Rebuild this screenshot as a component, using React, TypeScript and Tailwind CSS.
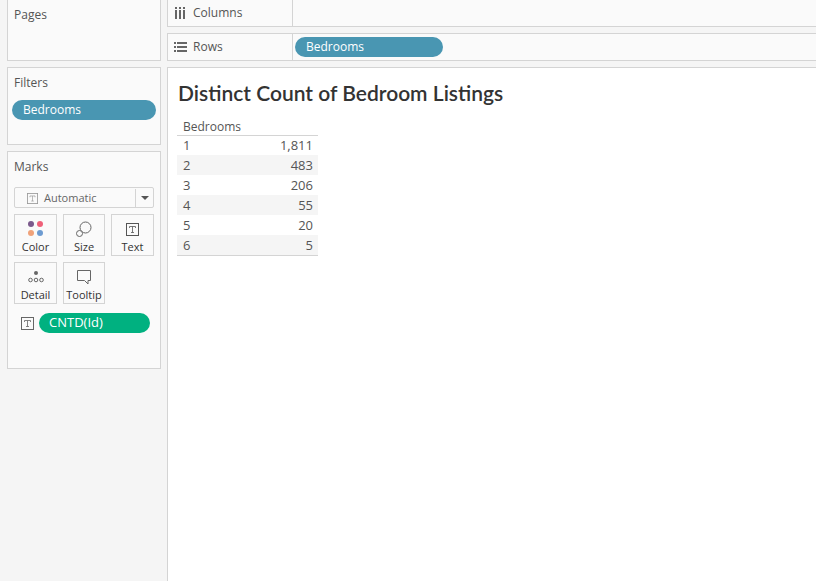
const font = "[font-family:'Open_Sans','Noto_Sans',sans-serif]";

const rows = [
  { bedrooms: "1", count: "1,811" },
  { bedrooms: "2", count: "483" },
  { bedrooms: "3", count: "206" },
  { bedrooms: "4", count: "55" },
  { bedrooms: "5", count: "20" },
  { bedrooms: "6", count: "5" },
];

function TextIcon({ className }: { className: string }) {
  return (
    <svg viewBox="0 0 13 13" className={className} fill="none">
      <rect x="0.5" y="0.5" width="12" height="12" stroke="currentColor" />
      <path d="M3.5 5V3.5H9.5V5M6.5 3.5V9.5M5 9.5H8" stroke="currentColor" strokeWidth="0.8" />
    </svg>
  );
}

function ColorIcon() {
  return (
    <svg viewBox="0 0 16 16" className="h-4 w-4">
      <circle cx="3" cy="3" r="3" fill="#7b5a8c" />
      <circle cx="12" cy="3" r="3" fill="#ef6079" />
      <circle cx="3" cy="12" r="3" fill="#f0a27a" />
      <circle cx="12" cy="12" r="3" fill="#6d9bd1" />
    </svg>
  );
}

function SizeIcon() {
  return (
    <svg viewBox="0 0 16 16" className="h-4 w-4" fill="none" stroke="#666">
      <circle cx="9.5" cy="6.5" r="5.5" fill="#fafafa" />
      <circle cx="3.5" cy="12.5" r="3" fill="#fafafa" />
    </svg>
  );
}

function DetailIcon() {
  return (
    <svg viewBox="0 0 16 16" className="h-4 w-4" fill="none" stroke="#666">
      <circle cx="8" cy="4" r="2" fill="#666" stroke="none" />
      <circle cx="2.5" cy="11" r="1.8" />
      <circle cx="8" cy="11" r="1.8" />
      <circle cx="13.5" cy="11" r="1.8" />
    </svg>
  );
}

function TooltipIcon() {
  return (
    <svg viewBox="0 0 16 16" className="h-4 w-4" fill="none" stroke="#666">
      <path d="M1.5 1.5H14.5V11.5H12V15L8.5 11.5H1.5Z" />
    </svg>
  );
}

function MarkButton({ label, icon }: { label: string; icon: React.ReactNode }) {
  return (
    <div className="flex h-[42px] flex-col items-center border border-[#d4d4d4] pt-[6px] text-[11px] leading-[14px] text-[#333]">
      <div className="flex h-4 items-center">{icon}</div>
      <span className="mt-[3px]">{label}</span>
    </div>
  );
}

function Pill({ label, className }: { label: string; className: string }) {
  return (
    <div className={`flex h-5 items-center rounded-full text-white ${className}`}>
      {label}
    </div>
  );
}

function ShelfRow({ icon, label, children, className }: { icon: React.ReactNode; label: string; children?: React.ReactNode; className: string }) {
  return (
    <div className={`flex border border-[#d4d4d4] bg-[#fafafa] ${className}`}>
      <div className="flex w-[125px] items-center border-r border-[#d4d4d4] pl-[6px] text-[12px] text-[#555]">
        <span className="flex w-[19px] items-center">{icon}</span>
        {label}
      </div>
      <div className="flex items-center pl-[2px]">{children}</div>
    </div>
  );
}

export default function App() {
  return (
    <div className={`flex h-[581px] w-[816px] overflow-hidden bg-[#f5f5f5] ${font}`}>
      <aside className="flex w-[167px] shrink-0 flex-col gap-[6px] pl-[7px] pr-[6px]">
        <section className="h-[61px] border border-t-0 border-[#d4d4d4] bg-[#fafafa] pl-[6px] pt-[7px] text-[12px] leading-4 text-[#555]">
          Pages
        </section>
        <section className="h-[78px] border border-[#d4d4d4] bg-[#fafafa] pt-[7px] text-[12px] leading-4 text-[#555]">
          <p className="pl-[6px]">Filters</p>
          <Pill label="Bedrooms" className="mx-1 mt-[9px] bg-[#4996b2] pl-[11px] text-[12px]" />
        </section>
        <section className="h-[218px] border border-[#d4d4d4] bg-[#fafafa] px-[6px] pt-[7px]">
          <p className="text-[12px] leading-4 text-[#555]">Marks</p>
          <div className="mt-[12px] flex h-[21px] items-center rounded-[2px] border border-[#d4d4d4] pt-px text-[11px] text-[#666]">
            <div className="flex flex-1 items-center gap-[6px] pl-[12px]">
              <TextIcon className="h-[11px] w-[11px] text-[#999]" />
              Automatic
            </div>
            <div className="flex h-full w-[18px] items-center justify-center border-l border-[#d4d4d4]">
              <div className="h-0 w-0 border-x-[4px] border-t-[4px] border-x-transparent border-t-[#555]" />
            </div>
          </div>
          <div className="mt-[6px] grid grid-cols-[43px_42px_43px] gap-x-[6px] gap-y-[6px]">
            <MarkButton label="Color" icon={<ColorIcon />} />
            <MarkButton label="Size" icon={<SizeIcon />} />
            <MarkButton label="Text" icon={<TextIcon className="h-[13px] w-[13px] text-[#555]" />} />
            <MarkButton label="Detail" icon={<DetailIcon />} />
            <MarkButton label="Tooltip" icon={<TooltipIcon />} />
          </div>
          <div className="mt-[9px] flex items-center gap-[5px] pl-[7px]">
            <TextIcon className="h-[13px] w-[13px] text-[#666]" />
            <Pill label="CNTD(Id)" className="w-[111px] bg-[#00b180] pl-[10px] text-[13px]" />
          </div>
        </section>
      </aside>

      <main className="flex min-w-0 flex-1 flex-col">
        <ShelfRow
          className="h-[27px] border-t-0 border-r-0"
          label="Columns"
          icon={
            <svg viewBox="0 0 11 12" className="ml-px h-3 w-[11px]" fill="#666">
              <rect x="0" y="0" width="2" height="2" />
              <rect x="4" y="0" width="2" height="2" />
              <rect x="8" y="0" width="2" height="2" />
              <rect x="0" y="3" width="2" height="9" />
              <rect x="4" y="3" width="2" height="9" />
              <rect x="8" y="3" width="2" height="9" />
            </svg>
          }
        />
        <ShelfRow
          className="mt-[6px] h-[28px] border-r-0"
          label="Rows"
          icon={
            <svg viewBox="0 0 13 10" className="h-[10px] w-[13px]" fill="#666">
              <rect x="0" y="0" width="2" height="2" />
              <rect x="3" y="0" width="10" height="2" />
              <rect x="0" y="4" width="2" height="2" />
              <rect x="3" y="4" width="10" height="2" />
              <rect x="0" y="8" width="2" height="2" />
              <rect x="3" y="8" width="10" height="2" />
            </svg>
          }
        >
          <Pill label="Bedrooms" className="w-[148px] bg-[#4996b2] pl-[11px] text-[12px]" />
        </ShelfRow>
        <div className="mt-[6px] flex-1 border-l border-t border-[#d4d4d4] bg-white pl-[9px] pt-[13px]">
          <h1 className="ml-px [font-family:Lato,sans-serif] text-[21px] font-semibold leading-6 text-[#333]">
            Distinct Count of Bedroom Listings
          </h1>
          <div className="mt-[12px] w-[141px] text-[13px] text-[#555]">
            <div className="h-[19px] border-b border-[#d4d4d4] pl-[6px] text-[12px] leading-[19px]">Bedrooms</div>
            <div className="-mt-px">
              {rows.map((row, i) => (
                <div
                  key={row.bedrooms}
                  className={`flex h-5 items-center justify-between pl-[6px] pr-[5px] pt-px ${i % 2 === 1 ? "bg-[#f5f5f5]" : ""}`}
                >
                  <span>{row.bedrooms}</span>
                  <span>{row.count}</span>
                </div>
              ))}
            </div>
            <div className="border-t border-[#d4d4d4]" />
          </div>
        </div>
      </main>
    </div>
  );
}
